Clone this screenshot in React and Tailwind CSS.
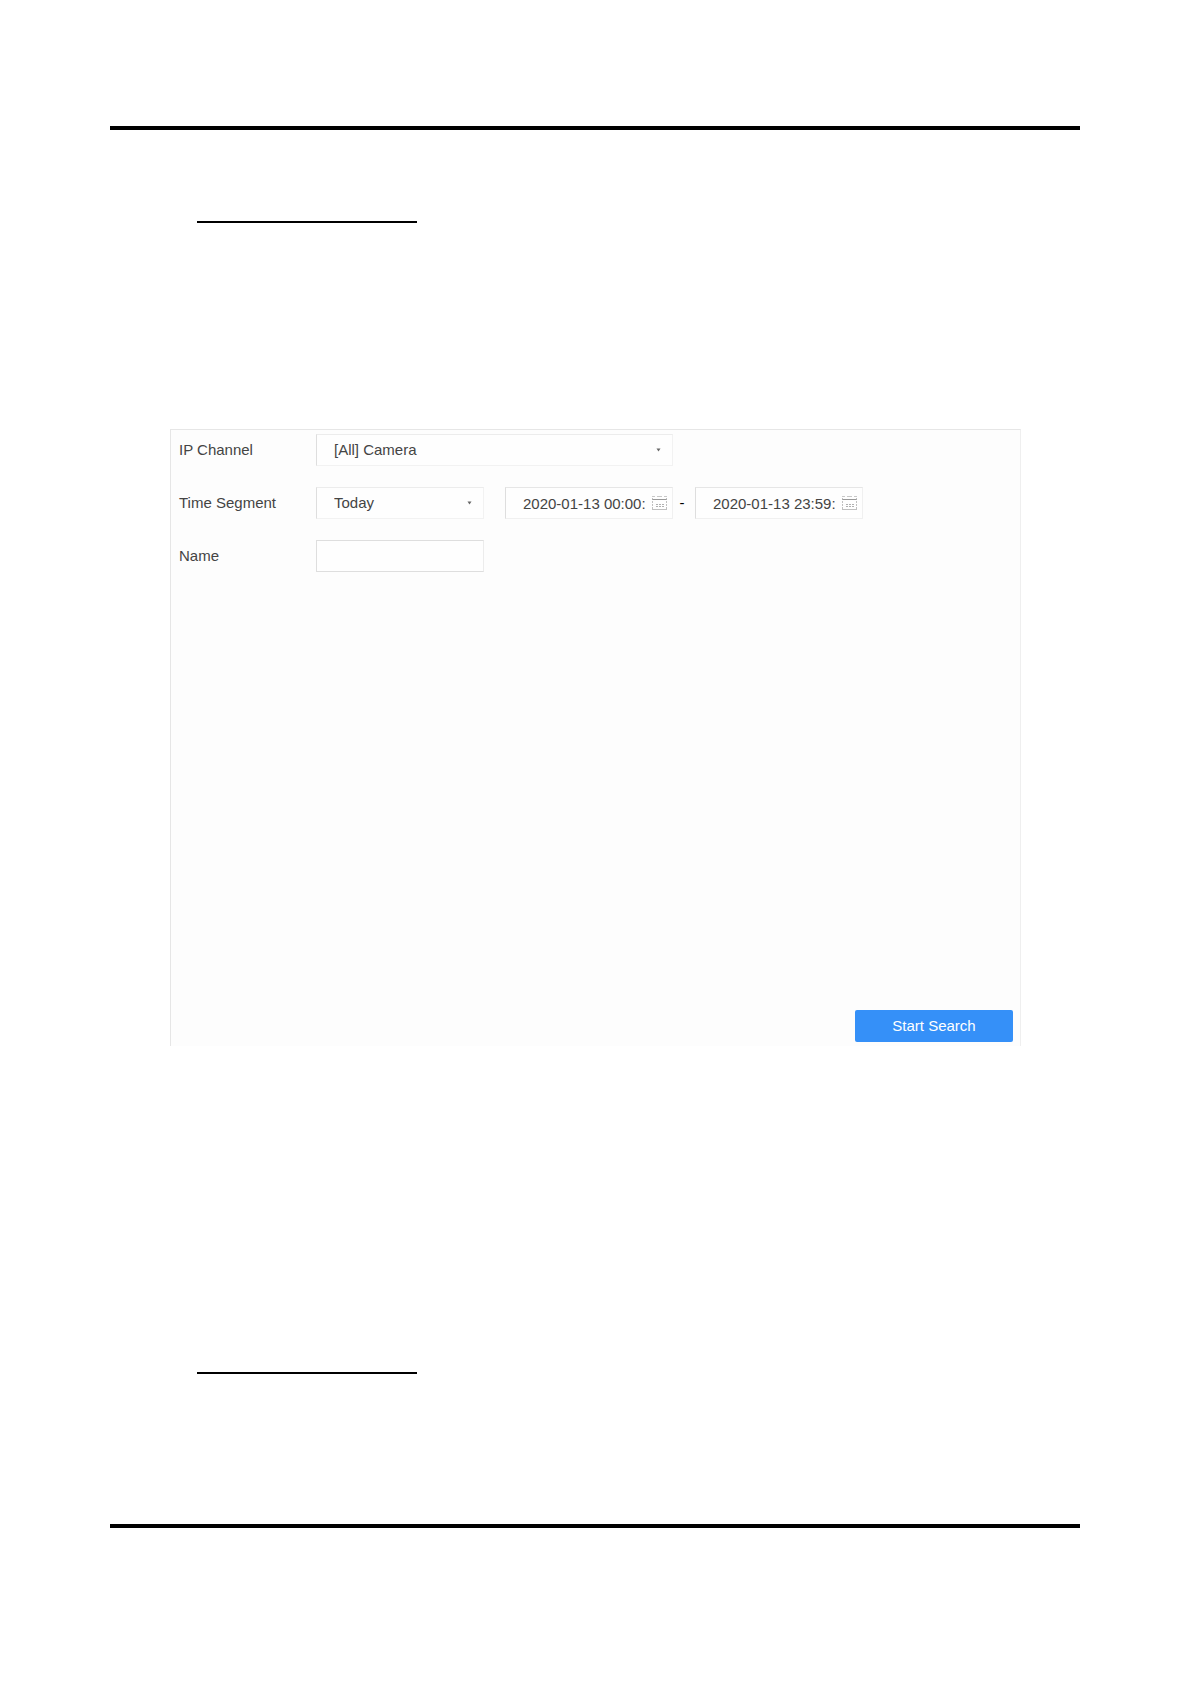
import React, { useState } from "react";

function CalendarIcon() {
  return (
    <svg width="16" height="16" viewBox="0 0 16 16" fill="none" stroke="#b0b0b0" aria-hidden="true">
      <path d="M0 1.5h3M5 1.5h5M12 1.5h3" strokeOpacity="0.7" />
      <path d="M0 4.5h15" stroke="#999" />
      <path d="M0.5 3v11M14.5 3v11" strokeDasharray="2 1" strokeOpacity="0.8" />
      <path d="M4 9.5h8M4 11.5h8" strokeDasharray="2 1" />
      <path d="M0 14.5h15" strokeOpacity="0.8" />
    </svg>
  );
}

function SelectField({ id, value, options, onChange, className }) {
  return (
    <div className={`relative h-8 ${className}`}>
      <select
        id={id}
        value={value}
        onChange={(e) => onChange(e.target.value)}
        className="h-full w-full appearance-none border border-[#f2f2f2] border-t-[#ececec] border-l-[#dedede] bg-[#fefefe] pl-[17px] pr-6"
      >
        {options.map((opt) => (
          <option key={opt} value={opt}>
            {opt}
          </option>
        ))}
      </select>
      <svg className="pointer-events-none absolute right-3 top-[14px]" width="5" height="4" viewBox="0 0 5 4" aria-hidden="true">
        <path d="M0.5 0.5h4L2.5 3.5z" fill="#666" />
      </svg>
    </div>
  );
}

function DateField({ label, value, onChange }) {
  return (
    <div className="flex h-8 w-[168px] items-center border border-[#f0f0f0] border-t-[#e6e6e6] border-l-[#dedede] bg-[#fefefe] pl-[17px] pr-1">
      <input
        type="text"
        aria-label={label}
        value={value}
        onChange={(e) => onChange(e.target.value)}
        className="h-full min-w-0 flex-1 bg-transparent outline-none"
      />
      <button type="button" aria-label={`Pick ${label.toLowerCase()}`} className="shrink-0">
        <CalendarIcon />
      </button>
    </div>
  );
}

export default function App() {
  const [channel, setChannel] = useState("[All] Camera");
  const [segment, setSegment] = useState("Today");
  const [start, setStart] = useState("2020-01-13 00:00:");
  const [end, setEnd] = useState("2020-01-13 23:59:");
  const [name, setName] = useState("");

  return (
    <main className="min-h-screen bg-white pl-[110px] pr-[111px] pt-[126px] pb-[156px] font-['Liberation_Sans',Arial,sans-serif] text-[15px] leading-5 text-[#444]">
      <hr className="h-1 border-0 bg-black" />
      <hr className="mt-[91px] ml-[87px] h-[2px] w-[220px] border-0 bg-black" />

      <form
        onSubmit={(e) => e.preventDefault()}
        className="ml-[60px] mr-[59px] mt-[206px] flex min-h-[617px] flex-col justify-between border border-b-0 border-[#e6e6e6] border-r-[#efefef] bg-[#fdfdfd] pl-2 pr-[7px] pt-1 pb-1"
      >
        <div className="flex flex-col gap-[21px]">
          <div className="flex items-center">
            <label htmlFor="channel" className="w-[137px] shrink-0">
              IP Channel
            </label>
            <SelectField
              id="channel"
              value={channel}
              options={["[All] Camera"]}
              onChange={setChannel}
              className="w-[357px]"
            />
          </div>

          <div className="flex items-center">
            <label htmlFor="segment" className="w-[137px] shrink-0">
              Time Segment
            </label>
            <SelectField
              id="segment"
              value={segment}
              options={["Today"]}
              onChange={setSegment}
              className="mr-[21px] w-[168px]"
            />
            <DateField label="Start time" value={start} onChange={setStart} />
            <span className="w-[22px] pr-1 text-center text-black">-</span>
            <DateField label="End time" value={end} onChange={setEnd} />
          </div>

          <div className="flex items-center">
            <label htmlFor="name" className="w-[137px] shrink-0">
              Name
            </label>
            <input
              id="name"
              type="text"
              value={name}
              onChange={(e) => setName(e.target.value)}
              className="h-8 w-[168px] border border-[#dedede] border-r-[#ececec] bg-[#fefefe] px-[17px]"
            />
          </div>
        </div>

        <button type="submit" className="h-8 w-[158px] self-end rounded-[2px] bg-[#3590f8] text-white">
          Start Search
        </button>
      </form>

      <hr className="mt-[326px] ml-[87px] h-[2px] w-[220px] border-0 bg-black" />
      <hr className="mt-[150px] h-1 border-0 bg-black" />
    </main>
  );
}
